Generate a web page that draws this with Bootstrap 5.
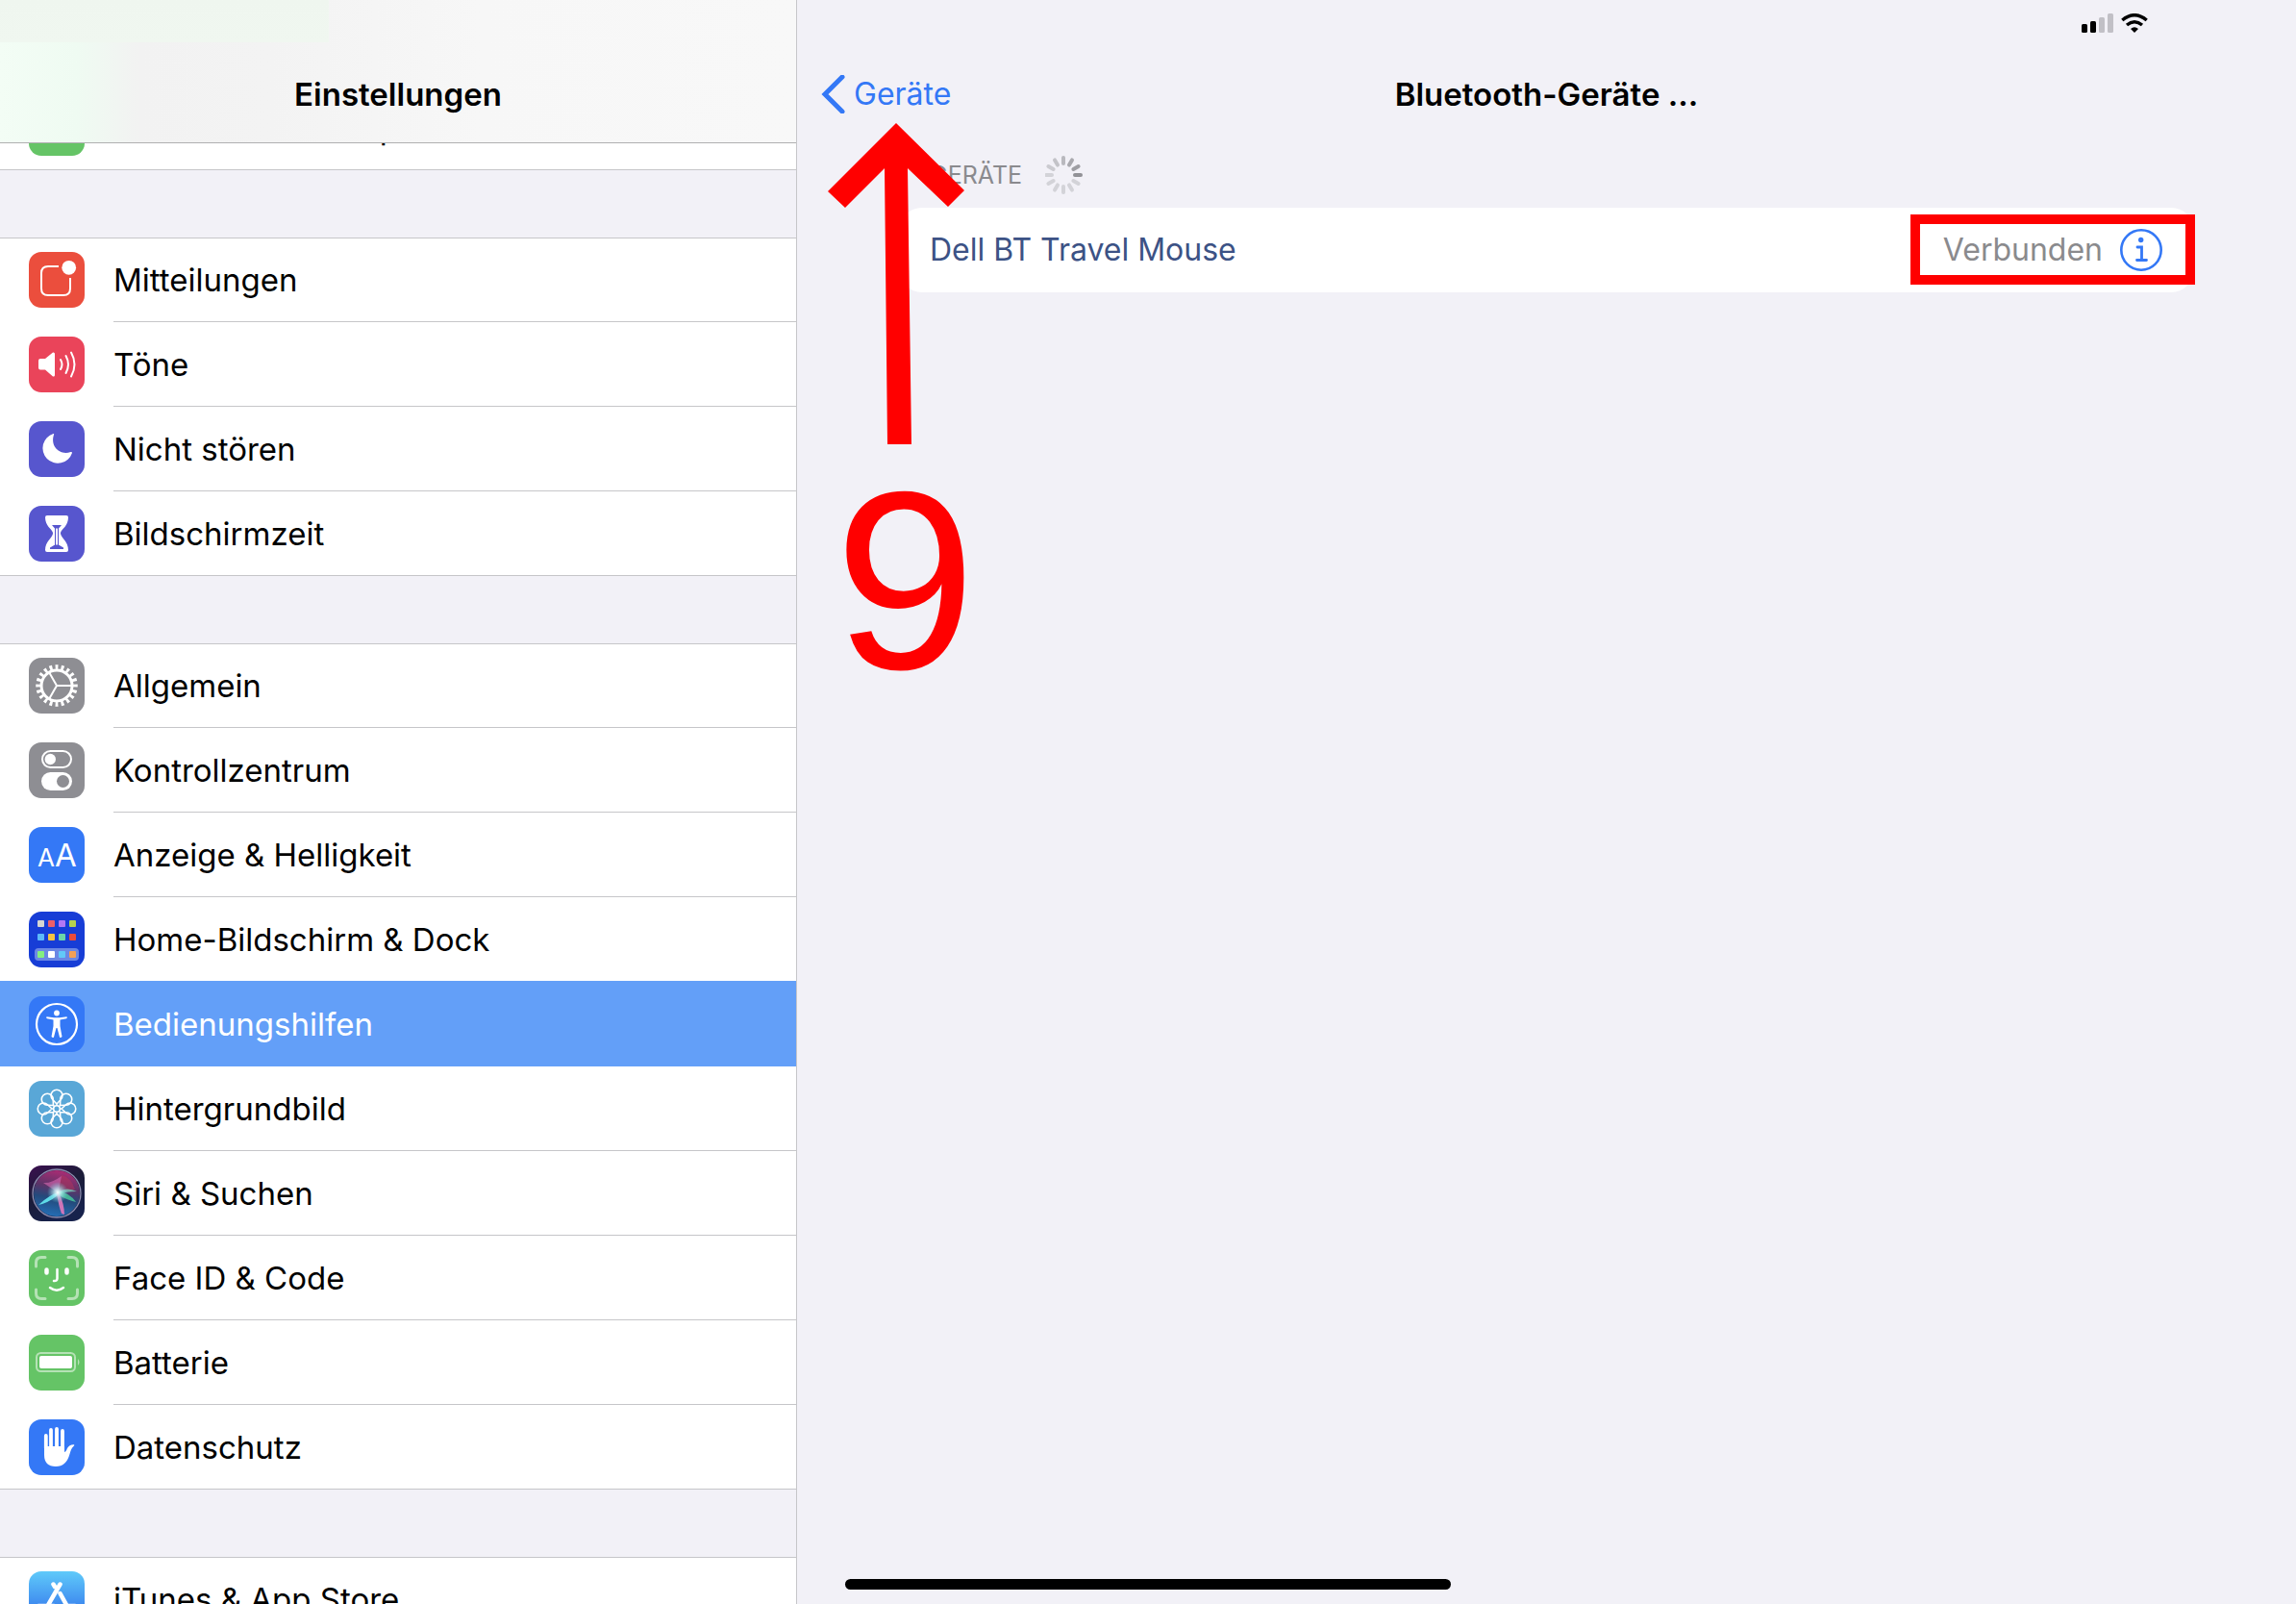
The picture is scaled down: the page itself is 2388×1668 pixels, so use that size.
<!DOCTYPE html>
<html lang="de">
<head>
<meta charset="utf-8">
<meta name="viewport" content="width=device-width, initial-scale=1">
<title>Einstellungen</title>
<link href="https://cdn.jsdelivr.net/npm/bootstrap@5.3.0/dist/css/bootstrap.min.css" rel="stylesheet">
<style>
:root{--ios-blue:#3478f6;--ios-bg:#f2f1f7;--ios-line:#c6c6c9}
body{font-family:Inter,"Liberation Sans",sans-serif;font-size:32px;line-height:40px;color:#000;background:var(--ios-bg)}
.side-panel{flex:0 0 829px;max-width:50%;border-right:1px solid var(--ios-line)}
.side-head{height:149px;padding-bottom:30px;border-bottom:1px solid #b0b0b1;background:
  linear-gradient(#eff6ef,#f0f7f0) 0 0/342px 44px no-repeat,
  linear-gradient(90deg,#f3fdf5 0,#effbf2 80px,#f2f2f2 145px,#f3f3f3 280px,#f7f7f7 500px,#f8f8f8)}
.pane-title{font-size:33px;line-height:40px;font-weight:600}
.side-scroll{margin-top:-60px;font-size:33px}
.set-group{background:#fff;box-shadow:inset 0 1px var(--ios-line),inset 0 -1px var(--ios-line);margin-bottom:70px}
.set-row{display:flex;height:88px;padding-left:30px;gap:30px;color:#000;text-decoration:none}
.set-row svg{flex:none;width:58px;height:58px;margin-top:15px;border-radius:13px}
.set-row span{flex:1;padding-top:24px;border-bottom:1px solid var(--ios-line);white-space:nowrap}
.set-row.is-active{position:relative;background:#639ff8;color:#fff;box-shadow:0 -1px #639ff8}
.set-row.is-active span{border-color:transparent}
.top-status{height:48px;padding:14px 154px 0 0}
.nav-top{height:100px;padding:30px 26px 0}
.back-link{color:var(--ios-blue);text-decoration:none}
.dev-area{padding:0 106px}
.dev-label{height:68px;padding-left:32px;font-size:25px;color:#8a8a8e}
.dev-card{height:88px;border-radius:24px;padding:0 33px 0 32px;color:#3c5285}
.dev-state{color:#8a8a8d;margin-right:18px}
.note-box{inset:7px -1px 8px auto;width:296px;border:10px solid red;pointer-events:none}
.note-arrow{left:32px;top:127px;pointer-events:none}
.note-num{left:39px;top:472px;font:264px/264px "Liberation Sans",Arial,sans-serif;color:red;pointer-events:none}
.home-bar{bottom:15px;left:50%;width:630px;margin-left:-315px;height:11px;border-radius:6px;background:#000}
</style>
<script src="https://cdn.jsdelivr.net/npm/bootstrap@5.3.0/dist/js/bootstrap.bundle.min.js"></script>
</head>
<body>
<div class="d-flex vh-100 overflow-hidden position-relative">
<aside class="side-panel d-flex flex-column overflow-hidden">
  <header class="side-head d-flex flex-column justify-content-end align-items-center position-relative z-1 flex-shrink-0">
    <h1 class="pane-title m-0">Einstellungen</h1>
  </header>
  <nav class="side-scroll" aria-label="Einstellungen">
    <div class="set-group">
      <a class="set-row" href="#"><svg viewBox="0 0 58 58"><rect width="58" height="58" fill="#65c466"/></svg><span>Persönlicher Hotspot</span></a>
    </div>
    <div class="set-group">
      <a class="set-row" href="#"><svg viewBox="0 0 58 58"><rect width="58" height="58" fill="#eb4e3d"/><path d="M31 15H20Q13 15 13 22V38Q13 45 20 45H36Q43 45 43 38V27" fill="none" stroke="#fff" stroke-width="2"/><circle cx="41.7" cy="16.3" r="7.4" fill="#fff"/></svg><span>Mitteilungen</span></a>
      <a class="set-row" href="#"><svg viewBox="0 0 58 58"><rect width="58" height="58" fill="#ea445a"/><path d="M12 23H17L25 16.5Q27 16 27 18V40Q27 42 25 41.500L17 34.500H12Q10 34.500 10 32.500V25Q10 23 12 23Z" fill="#fff"/><path d="M33 24Q36 29 33 34M38.500 20Q43.500 29 38.500 38M44 16.500Q51 29 44 41.500" fill="none" stroke="#fff" stroke-width="2" stroke-linecap="round"/></svg><span>Töne</span></a>
      <a class="set-row" href="#"><svg viewBox="0 0 58 58"><rect width="58" height="58" fill="#5756ce"/><path d="M25.500 13A15.700 15.700 0 1 0 45 33Q45 31.500 43.500 32C32 36 22 26 26 14Q26.500 12.500 25.500 13Z" fill="#fff"/></svg><span>Nicht stören</span></a>
      <a class="set-row" href="#"><svg viewBox="0 0 58 58"><rect width="58" height="58" fill="#5756ce"/><path d="M19 10H39Q41 10 41 12C41 21 34 24 33 28V29C34 34 41 37 41 46Q41 48 39 48H19Q17 48 17 46C17 37 24 34 25 29V28C24 24 17 21 17 12Q17 10 19 10Z" fill="#fff"/><path d="M24 20H34L31 23.500H27ZM28 40L29 41L30 40L36 43.500V45H22V43.500Z" fill="#5756ce"/><path d="M27.500 22V41M30.500 22V41" stroke="#5756ce" stroke-width="1"/></svg><span>Bildschirmzeit</span></a>
    </div>
    <div class="set-group">
      <a class="set-row" href="#"><svg viewBox="0 0 58 58"><rect width="58" height="58" fill="#8e8e93"/><g fill="none" stroke="#fff"><circle cx="29" cy="29" r="16" stroke-width="3"/><circle cx="29" cy="29" r="19" stroke-width="5.500" pathLength="80" stroke-dasharray="1.900 2.100" stroke-dashoffset="0.950"/><path d="M29 29H45M29 29L21 15M29 29L21 43" stroke-width="2"/></g></svg><span>Allgemein</span></a>
      <a class="set-row" href="#"><svg viewBox="0 0 58 58"><rect width="58" height="58" fill="#8e8e93"/><rect x="14" y="9" width="30" height="17" rx="8.500" fill="none" stroke="#fff" stroke-width="2"/><circle cx="22.300" cy="17.500" r="5.700" fill="#fff"/><rect x="13" y="31" width="32" height="19" rx="9.500" fill="#fff"/><circle cx="35.500" cy="40.500" r="6.500" fill="#8e8e93"/></svg><span>Kontrollzentrum</span></a>
      <a class="set-row" href="#"><svg viewBox="0 0 58 58"><rect width="58" height="58" fill="#3478f6"/><g fill="#fff" font-family="Inter,sans-serif"><text x="9" y="41" font-size="26">A</text><text x="27" y="41" font-size="33">A</text></g></svg><span>Anzeige &amp; Helligkeit</span></a>
      <a class="set-row" href="#"><svg viewBox="0 0 58 58"><rect width="58" height="58" fill="#173dd6"/><rect x="6" y="38" width="46" height="13" rx="4" fill="#6b87e4"/><rect x="9" y="9" width="7" height="7" rx="1" fill="#d5d5d2"/><rect x="20" y="9" width="7" height="7" rx="1" fill="#ec5f69"/><rect x="31" y="9" width="7" height="7" rx="1" fill="#b378f4"/><rect x="42" y="9" width="7" height="7" rx="1" fill="#b4d24f"/><rect x="9" y="23" width="7" height="7" rx="1" fill="#5cb9f9"/><rect x="20" y="23" width="7" height="7" rx="1" fill="#f5c341"/><rect x="31" y="23" width="7" height="7" rx="1" fill="#6bd4a8"/><rect x="42" y="23" width="7" height="7" rx="1" fill="#ea4b3c"/><rect x="9" y="41" width="7" height="7" rx="1" fill="#84ef80"/><rect x="20" y="41" width="7" height="7" rx="1" fill="#fff"/><rect x="31" y="41" width="7" height="7" rx="1" fill="#62c9f8"/><rect x="42" y="41" width="7" height="7" rx="1" fill="#f2a057"/></svg><span>Home-Bildschirm &amp; Dock</span></a>
      <a class="set-row is-active" href="#" aria-current="page"><svg viewBox="0 0 58 58"><rect width="58" height="58" fill="#3478f6"/><circle cx="29" cy="29" r="21" fill="none" stroke="#fff" stroke-width="2.200"/><circle cx="29" cy="17.500" r="2.900" fill="#fff"/><path d="M18.500 21.200L26 22.200H32L39.500 21.200Q40.500 22.800 39 23.200L32.500 24.500V31L34.500 42Q33 43.800 32 42.500L29.500 33H28.500L26 42.500Q25 43.800 23.500 42L25.500 31V24.500L19 23.200Q17.500 22.800 18.500 21.200Z" fill="#fff"/></svg><span>Bedienungshilfen</span></a>
      <a class="set-row" href="#"><svg viewBox="0 0 58 58"><rect width="58" height="58" fill="#59a7d7"/><defs><g id="petal"><path d="M29 25.500V24M29 24L24.800 19.500A6 6 0 1 1 33.200 19.500L29 24"/></g></defs><g fill="none" stroke="#fff" stroke-width="1.600"><circle cx="29" cy="29" r="3.300"/><use href="#petal"/><use href="#petal" transform="rotate(45 29 29)"/><use href="#petal" transform="rotate(90 29 29)"/><use href="#petal" transform="rotate(135 29 29)"/><use href="#petal" transform="rotate(180 29 29)"/><use href="#petal" transform="rotate(225 29 29)"/><use href="#petal" transform="rotate(270 29 29)"/><use href="#petal" transform="rotate(315 29 29)"/></g></svg><span>Hintergrundbild</span></a>
      <a class="set-row" href="#"><svg viewBox="0 0 58 58"><defs><linearGradient id="sBg" x1="0" y1="0" x2=".5" y2="1"><stop stop-color="#3c1050"/><stop offset=".5" stop-color="#1b1c38"/><stop offset="1" stop-color="#17224c"/></linearGradient><linearGradient id="sOrb" x1=".5" y1="0" x2=".3" y2="1"><stop stop-color="#a82c74"/><stop offset=".35" stop-color="#5c3468"/><stop offset=".6" stop-color="#234a7c"/><stop offset="1" stop-color="#2470b8"/></linearGradient><radialGradient id="sGlow"><stop stop-color="#fff"/><stop offset=".3" stop-color="#c9f4f8" stop-opacity=".8"/><stop offset="1" stop-color="#60c8d8" stop-opacity="0"/></radialGradient></defs><rect width="58" height="58" fill="url(#sBg)"/><circle cx="29" cy="29" r="24" fill="url(#sOrb)"/><circle cx="29" cy="29" r="25" fill="none" stroke="#8c8cae" stroke-width="1.300"/><path d="M29 28L34 10Q44 12 48 25Z" fill="#b5345c" opacity=".5"/><path d="M30 28L15 18Q23 19 34 11Q32 20 31 28Z" fill="#e070b8" opacity=".55"/><path d="M31 27Q40 22 50 27Q39 27 31 30Z" fill="#7bd8c0" opacity=".7"/><path d="M29 26Q42 28 49 38Q40 36 29 30Z" fill="#49d5a1" opacity=".75"/><path d="M31 28Q22 30 10 41Q20 39 30 31Z" fill="#65eaf2" opacity=".9"/><path d="M29 29Q31 42 34 50L37 51Q37 40 31 28Z" fill="#eb7ac0" opacity=".85"/><circle cx="30" cy="28" r="11" fill="url(#sGlow)"/></svg><span>Siri &amp; Suchen</span></a>
      <a class="set-row" href="#"><svg viewBox="0 0 58 58"><rect width="58" height="58" fill="#65c466"/><path d="M7.500 17V13Q7.500 7.500 13 7.500H17M41 7.500H45Q50.500 7.500 50.500 13V17M50.500 41V45Q50.500 50.500 45 50.500H41M17 50.500H13Q7.500 50.500 7.500 45V41" fill="none" stroke="#b5e2b5" stroke-width="3" stroke-linecap="round"/><g fill="none" stroke="#fff" stroke-linecap="round"><path d="M18.500 20.500V23.500M39.500 20.500V23.500" stroke-width="4.500"/><path d="M29.500 20V29.500Q29.500 32.300 26 32M22 39Q29 44.500 36 39" stroke-width="2.500"/></g></svg><span>Face ID &amp; Code</span></a>
      <a class="set-row" href="#"><svg viewBox="0 0 58 58"><rect width="58" height="58" fill="#65c466"/><rect x="8" y="19" width="40" height="19" rx="4.500" fill="none" stroke="#b5e2b5" stroke-width="2"/><rect x="11" y="22" width="34" height="13" rx="2" fill="#fff"/><path d="M51 25Q54 28.500 51 32Z" fill="#b5e2b5"/></svg><span>Batterie</span></a>
      <a class="set-row" href="#"><svg viewBox="0 0 58 58"><rect width="58" height="58" fill="#3478f6"/><path d="M17.800 17V30M23 11V30M29 10V30M35 12V30" stroke="#fff" stroke-width="3.800" stroke-linecap="round" fill="none"/><path d="M16 28H37V34Q38.500 34 40 30Q42 26 47 26.200Q48 27 46.500 28Q44 30 42.500 36Q39 49 28 49Q16 49 16 37Z" fill="#fff"/></svg><span>Datenschutz</span></a>
    </div>
    <div class="set-group">
      <a class="set-row" href="#"><svg viewBox="0 0 58 58"><defs><linearGradient id="store" x1="0" y1="0" x2="0" y2="1"><stop stop-color="#5fcafa"/><stop offset="1" stop-color="#2a62e8"/></linearGradient></defs><rect width="58" height="58" fill="url(#store)"/><path d="M32.500 13.500L16 42M25.500 13.500L27 16M32.500 23L43 42M10 36H26M36 36H48" stroke="#fff" stroke-width="4.500" stroke-linecap="round"/></svg><span>iTunes &amp; App Store</span></a>
    </div>
  </nav>
</aside>
<main class="flex-fill position-relative">
  <div class="top-status d-flex justify-content-end gap-2">
    <svg width="33" height="20" viewBox="0 0 33 20" role="img" aria-label="Mobilfunk"><rect y="11" width="6" height="9" rx="1.500"/><rect x="9" y="8" width="6" height="12" rx="1.500"/><rect x="18" y="4" width="6" height="16" rx="1.500" fill="#c1c0c6"/><rect x="27" width="6" height="20" rx="1.500" fill="#c1c0c6"/></svg>
    <svg width="28" height="20" viewBox="0 0 28 20" role="img" aria-label="WLAN"><g fill="none" stroke="#000" stroke-width="3.500"><path d="M1.300 7Q14 -3.500 26.700 7M6 12Q14 5.500 22 12"/></g><path d="M10 16Q14 12.500 18 16L14 20Z"/></svg>
  </div>
  <div class="nav-top position-relative text-center">
    <a href="#" class="back-link d-flex align-items-center position-absolute start-0 ms-4"><svg class="me-2" width="27" height="40" viewBox="0 2 27 40"><path d="M23 4L5 22L23 40" fill="none" stroke="#3478f6" stroke-width="5" stroke-linecap="round" overflow="visible"/></svg>Geräte</a>
    <h2 class="pane-title m-0">Bluetooth-Geräte ...</h2>
  </div>
  <section class="dev-area">
    <div class="dev-label d-flex align-items-center"><span>GERÄTE</span>
      <svg class="ms-4" width="40" height="40" viewBox="-19 -20 40 40" role="img" aria-label="Suche läuft"><g stroke="#d3d3d8" stroke-width="4" stroke-linecap="round"><path d="M0 -12V-18" stroke="#b9b9be"/><path d="M0 -12V-18" transform="rotate(30)" stroke="#a9a9ae"/><path d="M0 -12V-18" transform="rotate(60)" stroke="#9e9ea3"/><path d="M0 -12V-18" transform="rotate(90)" stroke="#929297"/><path d="M0 -12V-18" transform="rotate(120)"/><path d="M0 -12V-18" transform="rotate(150)"/><path d="M0 -12V-18" transform="rotate(180)"/><path d="M0 -12V-18" transform="rotate(210)"/><path d="M0 -12V-18" transform="rotate(240)"/><path d="M0 -12V-18" transform="rotate(270)"/><path d="M0 -12V-18" transform="rotate(300)" stroke="#cbcbd0"/><path d="M0 -12V-18" transform="rotate(330)" stroke="#c3c3c8"/></g></svg>
    </div>
    <div class="dev-card bg-white d-flex align-items-center position-relative">
      <span class="me-auto">Dell BT Travel Mouse</span>
      <span class="dev-state">Verbunden</span>
      <button type="button" class="btn p-0 border-0 d-flex" aria-label="Info"><svg width="44" height="44" viewBox="0 0 44 44" fill="none" stroke="#3478f6"><circle cx="22" cy="22" r="20.700" stroke-width="2.600"/><circle cx="21.700" cy="11.500" r="2.700" fill="#3478f6" stroke="none"/><path d="M18 19H22.500V32.500M17.500 32.500H27.500" stroke-width="2.800" stroke-linecap="round"/></svg></button>
      <div class="note-box position-absolute"></div>
    </div>
  </section>
  <svg class="note-arrow position-absolute" width="143" height="335" viewBox="0 0 143 335" aria-hidden="true"><path d="M71 1L0 72L18 89L59 48L62 335H87L83 48L125 88L142 71Z" fill="red"/></svg>
  <div class="note-num position-absolute">9</div>
</main>
<div class="home-bar position-absolute"></div>
</div>
</body>
</html>
